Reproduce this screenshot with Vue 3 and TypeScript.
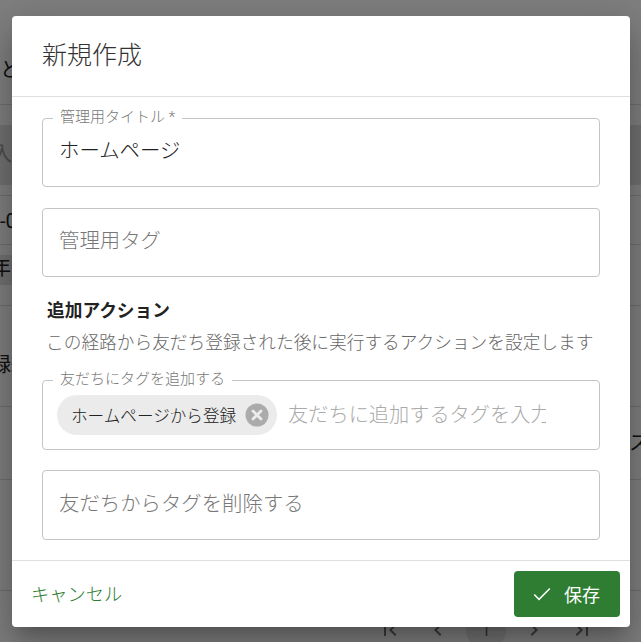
<script setup lang="ts">
const rules = [104, 195, 244, 305, 406, 479, 590]
</script>

<template>
  <div class="page">
    <!-- page behind the dialog -->
    <div class="behind">
      <div class="band band-a" />
      <div class="band band-b" />
      <div v-for="y in rules" :key="y" class="rule" :style="{ top: y + 'px' }" />
      <span class="bit bit-to">と</span>
      <span class="bit bit-in">入</span>
      <span class="bit bit-dash">-0</span>
      <span class="bit bit-date">年日</span>
      <span class="bit bit-reg">録練</span>
      <span class="bit bit-su">ス</span>
      <div class="pager">
        <span class="page-btn">
          <svg viewBox="0 0 24 24" width="24" height="24"><path d="M18.41 16.59 13.82 12l4.59-4.59L17 6l-6 6 6 6zM6 6h2v12H6z" /></svg>
        </span>
        <span class="page-btn">
          <svg viewBox="0 0 24 24" width="24" height="24"><path d="M15.41 7.41 14 6l-6 6 6 6 1.41-1.41L10.83 12z" /></svg>
        </span>
        <span class="page-btn current">1</span>
        <span class="page-btn">
          <svg viewBox="0 0 24 24" width="24" height="24"><path d="M10 6 8.59 7.41 13.17 12l-4.58 4.59L10 18l6-6z" /></svg>
        </span>
        <span class="page-btn">
          <svg viewBox="0 0 24 24" width="24" height="24"><path d="M5.59 7.41 10.18 12l-4.59 4.59L7 18l6-6-6-6zM16 6h2v12h-2z" /></svg>
        </span>
      </div>
    </div>
    <div class="overlay" />

    <div class="dialog">
      <header class="dialog-title">新規作成</header>
      <main class="dialog-body">
        <fieldset class="field with-legend">
          <legend>管理用タイトル *</legend>
          <div class="value">ホームページ</div>
        </fieldset>
        <fieldset class="field">
          <div class="value placeholder">管理用タグ</div>
        </fieldset>
        <h3 class="section-title">追加アクション</h3>
        <p class="section-desc">この経路から友だち登録された後に実行するアクションを設定します</p>
        <fieldset class="field with-legend tall">
          <legend>友だちにタグを追加する</legend>
          <div class="tag-row">
            <span class="chip">
              <span class="chip-text">ホームページから登録</span>
              <svg class="chip-x" viewBox="0 0 24 24" width="24" height="24">
                <circle cx="12" cy="12" r="11.5" fill="#ababab" />
                <path stroke="#ececec" stroke-width="2.8" stroke-linecap="round" d="M8 8l8 8M16 8l-8 8" />
              </svg>
            </span>
            <span class="tag-input">友だちに追加するタグを入力</span>
          </div>
        </fieldset>
        <fieldset class="field tall">
          <div class="value placeholder">友だちからタグを削除する</div>
        </fieldset>
      </main>
      <footer class="dialog-actions">
        <button class="btn-text">キャンセル</button>
        <button class="btn-save">
          <svg viewBox="0 0 24 24" width="24" height="24">
            <path fill="#fff" d="M9 16.2 4.8 12l-1.1 1.1L9 18.4 20.4 7l-1.1-1.1z" />
          </svg>
          <span>保存</span>
        </button>
      </footer>
    </div>
  </div>
</template>

<style>
html,
body {
  margin: 0;
  overflow: hidden;
}
</style>

<style scoped>
.page {
  position: relative;
  width: 641px;
  height: 642px;
  overflow: hidden;
  background: #fff;
  font-family: Roboto, "Noto Sans CJK JP", sans-serif;
  font-weight: 300;
}

.behind {
  position: absolute;
  inset: 0;
  color: #222;
  font-size: 20px;
  font-weight: 400;
}

.band {
  position: absolute;
  left: 0;
  right: 0;
  background: #e2e2e2;
}

.band-a {
  top: 125px;
  height: 60px;
}

.band-b {
  top: 255px;
  height: 30px;
  right: auto;
  width: 100px;
}

.rule {
  position: absolute;
  left: 0;
  right: 0;
  height: 1px;
  background: #ddd;
}

.bit {
  position: absolute;
  white-space: nowrap;
  line-height: 24px;
}

.bit-to { left: 0; top: 58px; }
.bit-in { left: -8px; top: 142px; color: #999; }
.bit-dash { left: 0; top: 209px; }
.bit-date { left: -9px; top: 256px; }
.bit-reg { left: -9px; top: 353px; }
.bit-su { left: 629px; top: 431px; }

.pager {
  position: absolute;
  left: 366px;
  top: 610px;
  display: flex;
  color: #777;
  font-size: 16px;
}

.page-btn {
  width: 48px;
  height: 40px;
  display: flex;
  align-items: center;
  justify-content: center;
  fill: #777;
}

.page-btn.current {
  position: relative;
  z-index: 0;
  color: #666;
}

.page-btn.current::before {
  content: "";
  position: absolute;
  left: 4px;
  top: 0;
  z-index: -1;
  width: 40px;
  height: 40px;
  border-radius: 50%;
  background: #e8e8e8;
}

.overlay {
  position: absolute;
  inset: 0;
  background: rgba(0, 0, 0, 0.5);
}

.dialog {
  position: absolute;
  left: 12px;
  top: 16px;
  width: 618px;
  height: 611px;
  display: flex;
  flex-direction: column;
  background: #fff;
  border-radius: 4px;
  box-shadow: 0 11px 15px -7px rgba(0, 0, 0, 0.2), 0 24px 38px 3px rgba(0, 0, 0, 0.14), 0 9px 46px 8px rgba(0, 0, 0, 0.12);
}

.dialog-title {
  height: 81px;
  box-sizing: border-box;
  padding: 0 30px;
  line-height: 80px;
  font-size: 25px;
  color: #333;
  border-bottom: 1px solid #e0e0e0;
}

.dialog-body {
  flex: 1;
  padding: 0 30px;
  min-height: 0;
}

.field {
  margin: 13px 0 21px;
  padding: 0 16px;
  height: 69px;
  box-sizing: border-box;
  border: 1px solid #c4c4c4;
  border-radius: 4px;
  min-width: 0;
}

.field.with-legend {
  height: 77px;
}

.field.tall {
  height: 70px;
  margin-bottom: 20px;
}

.field.with-legend.tall {
  height: 78px;
}

.field legend {
  margin-left: -6px;
  padding: 0 7px 2px;
  font-size: 15px;
  line-height: 14px;
  color: #777;
}

.value {
  font-size: 20.4px;
  line-height: 28px;
  padding-top: 18px;
  color: #222;
}

.field legend + .value {
  padding-top: 11px;
}

.tall .value {
  padding-top: 19px;
}

.placeholder {
  color: #777;
}

.section-title {
  margin: 22px 5px 0;
  font-size: 17.7px;
  line-height: 24px;
  font-weight: 700;
  color: #222;
}

.section-desc {
  margin: 8px 5px 17px 4px;
  font-size: 17.7px;
  line-height: 24px;
  color: #666;
  white-space: nowrap;
}

.tag-row {
  display: flex;
  align-items: center;
  gap: 11px;
  margin-top: 7px;
  margin-left: -2px;
  height: 40px;
  white-space: nowrap;
}

.chip {
  display: inline-flex;
  align-items: center;
  height: 40px;
  padding: 0 8px 0 14px;
  border-radius: 20px;
  background: #ebebeb;
  color: #222;
  font-size: 16.6px;
}

.chip-text {
  margin-right: 9px;
}

.tag-input {
  width: 258px;
  overflow: hidden;
  font-size: 20.2px;
  line-height: 28px;
  color: #aaa;
}

.dialog-actions {
  height: 67px;
  box-sizing: border-box;
  display: flex;
  align-items: center;
  justify-content: space-between;
  padding: 0 10px 0 19px;
  border-top: 1px solid #e0e0e0;
}

.btn-text {
  border: 0;
  background: none;
  padding: 0;
  margin-bottom: 3px;
  font: inherit;
  font-size: 18.3px;
  color: #2e7d32;
}

.btn-save {
  width: 106px;
  height: 46px;
  display: flex;
  align-items: center;
  gap: 10px;
  padding: 0 0 0 16px;
  border: 0;
  border-radius: 4px;
  background: #2e7d32;
  color: #fff;
  font: inherit;
  font-size: 18px;
  font-weight: 400;
}
</style>
